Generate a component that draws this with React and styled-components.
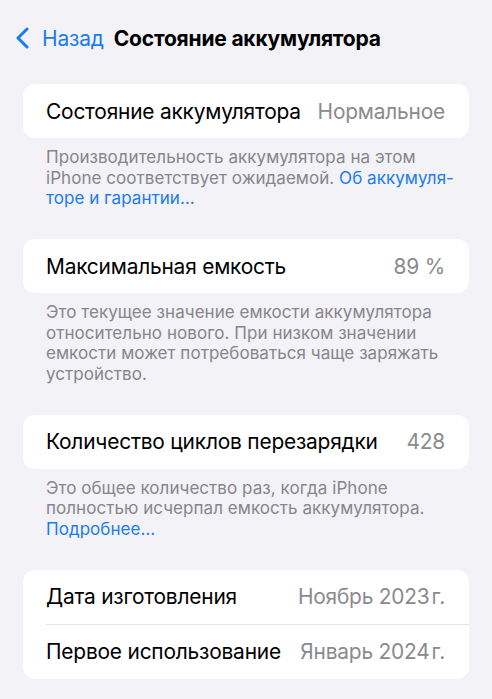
import React from 'react';
import styled, { createGlobalStyle } from 'styled-components';

const GlobalStyle = createGlobalStyle`
  html, body {
    margin: 0;
    padding: 0;
    background: #f2f2f7;
  }
  body {
    font-family: Inter, "Noto Sans", "Liberation Sans", sans-serif;
    -webkit-font-smoothing: antialiased;
  }
`;

const Screen = styled.div`
  width: 492px;
  min-height: 699px;
  background: #f2f2f7;
  box-sizing: border-box;
  padding-top: 24px;
`;

const NavBar = styled.div`
  display: flex;
  align-items: center;
  height: 28px;
  padding-left: 15px;
`;

const BackButton = styled.div`
  display: flex;
  align-items: center;
  gap: 12px;
  color: #1a7cf0;
  font-size: 21px;
  letter-spacing: -0.2px;
`;

const Title = styled.div`
  margin-left: 10px;
  font-size: 21px;
  font-weight: 700;
  color: #000;
  letter-spacing: -0.2px;
`;

const Content = styled.div`
  display: flex;
  flex-direction: column;
  padding: 32px 23px 0 23px;
`;

const Section = styled.div`
  margin-bottom: 30.5px;
`;

const Card = styled.div`
  background: #fff;
  border-radius: 12px;
  overflow: hidden;
`;

const Row = styled.div`
  display: flex;
  align-items: center;
  justify-content: space-between;
  height: 54px;
  padding: 0 24px 0 23px;
  font-size: 20.9px;
  letter-spacing: -0.2px;
`;

const Divider = styled.div`
  height: 1px;
  background: #e3e3e7;
  margin-left: 23px;
`;

const Label = styled.span`
  color: #000;
`;

const Value = styled.span`
  color: #8a8a8e;
`;

const Unit = styled.span`
  margin-left: 2px;
`;

const Footer = styled.div`
  padding: 9px 23px 0 23px;
  font-size: 17px;
  line-height: 20.5px;
  color: #86868b;
  letter-spacing: 0.05px;
`;

const Line = styled.div`
  white-space: nowrap;
`;

const Link = styled.span`
  color: #1a7cf0;
`;

const Chevron = () => (
  <svg width="15" height="22" viewBox="0 0 15 22" fill="none">
    <path d="M12 2 L3 11 L12 20" stroke="#1a7cf0" strokeWidth="3" strokeLinecap="round" strokeLinejoin="round" />
  </svg>
);

export default function App() {
  return (
    <Screen>
      <GlobalStyle />
      <NavBar>
        <BackButton>
          <Chevron />
          <span>Назад</span>
        </BackButton>
        <Title>Состояние аккумулятора</Title>
      </NavBar>

      <Content>
        <Section>
          <Card>
            <Row>
              <Label>Состояние аккумулятора</Label>
              <Value>Нормальное</Value>
            </Row>
          </Card>
          <Footer>
            <Line>Производительность аккумулятора на этом</Line>
            <Line>
              iPhone соответствует ожидаемой. <Link>Об аккумуля-</Link>
            </Line>
            <Line>
              <Link>торе и гарантии…</Link>
            </Line>
          </Footer>
        </Section>

        <Section>
          <Card>
            <Row>
              <Label>Максимальная емкость</Label>
              <Value>89 %</Value>
            </Row>
          </Card>
          <Footer>
            <Line>Это текущее значение емкости аккумулятора</Line>
            <Line>относительно нового. При низком значении</Line>
            <Line>емкости может потребоваться чаще заряжать</Line>
            <Line>устройство.</Line>
          </Footer>
        </Section>

        <Section>
          <Card>
            <Row>
              <Label>Количество циклов перезарядки</Label>
              <Value>428</Value>
            </Row>
          </Card>
          <Footer>
            <Line>Это общее количество раз, когда iPhone</Line>
            <Line>полностью исчерпал емкость аккумулятора.</Line>
            <Line>
              <Link>Подробнее…</Link>
            </Line>
          </Footer>
        </Section>

        <Section>
          <Card>
            <Row>
              <Label>Дата изготовления</Label>
              <Value>
                Ноябрь 2023<Unit>г.</Unit>
              </Value>
            </Row>
            <Divider />
            <Row>
              <Label>Первое использование</Label>
              <Value>
                Январь 2024<Unit>г.</Unit>
              </Value>
            </Row>
          </Card>
        </Section>
      </Content>
    </Screen>
  );
}
